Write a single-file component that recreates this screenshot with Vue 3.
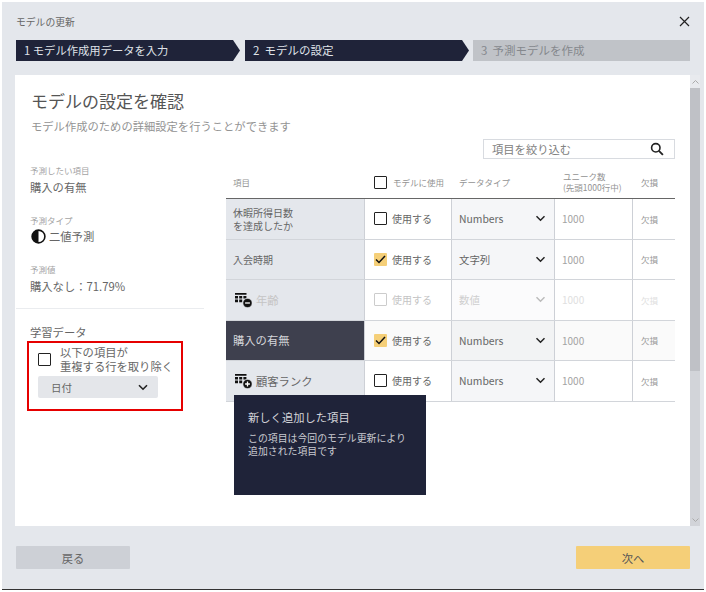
<script setup>
const rows = [
  { name: '休暇所得日数\nを達成したか', small: true, checked: false, type: 'Numbers' },
  { name: '入会時期', small: true, checked: true, type: '文字列' },
  { name: '年齢', icon: 'minus', checked: false, type: '数値', disabled: true },
  { name: '購入の有無', checked: true, type: 'Numbers', target: true },
  { name: '顧客ランク', icon: 'plus', checked: false, type: 'Numbers' }
]
</script>

<template>
  <div class="dialog">
    <header class="top">
      <span class="dialog-title">モデルの更新</span>
      <svg class="close" width="11" height="11" viewBox="0 0 11 11"><path d="M1 1l9 9M10 1l-9 9" stroke="#222" stroke-width="1.2" fill="none" /></svg>
    </header>
    <div class="steps">
      <div class="step step-one">1 モデル作成用データを入力</div>
      <div class="step step-two">2&nbsp; モデルの設定</div>
      <div class="step step-three">3&nbsp; 予測モデルを作成</div>
    </div>

    <main class="panel">
      <div class="content">
        <h1>モデルの設定を確認</h1>
        <p class="subtitle">モデル作成のための詳細設定を行うことができます</p>
        <div class="search-row">
          <div class="search">
            <span>項目を絞り込む</span>
            <svg width="14" height="14" viewBox="0 0 14 14"><circle cx="5.8" cy="5.8" r="4.2" stroke="#222" stroke-width="1.6" fill="none" /><path d="M8.9 8.9l4 4" stroke="#222" stroke-width="1.8" fill="none" /></svg>
          </div>
        </div>
        <div class="columns">
          <aside class="side">
            <div class="info info-first">
              <div class="label">予測したい項目</div>
              <div class="value">購入の有無</div>
            </div>
            <div class="info">
              <div class="label">予測タイプ</div>
              <div class="value with-icon">
                <svg width="15" height="15" viewBox="0 0 15 15"><circle cx="7.5" cy="7.5" r="6.4" fill="#fff" stroke="#111" stroke-width="1.6" /><path d="M7.5 1.1a6.4 6.4 0 0 0 0 12.8z" fill="#111" /></svg>
                <span>二値予測</span>
              </div>
            </div>
            <div class="info">
              <div class="label">予測値</div>
              <div class="value">購入なし：71.79%</div>
            </div>
            <div class="learning">
              <div class="learning-title">学習データ</div>
              <div class="highlight">
                <div class="dedupe">
                  <span class="box"></span>
                  <span class="dedupe-text">以下の項目が<br />重複する行を取り除く</span>
                </div>
                <div class="date-select">
                  <span>日付</span>
                  <svg width="10" height="7" viewBox="0 0 10 7"><path d="M1 1.2l4 4 4-4" stroke="#222" stroke-width="1.6" fill="none" /></svg>
                </div>
              </div>
            </div>
          </aside>

          <section class="table-wrap">
            <div class="grid head">
              <div class="hcell hname">項目</div>
              <div class="hcell huse"><span class="box"></span><span>モデルに使用</span></div>
              <div class="hcell htype">データタイプ</div>
              <div class="hcell hunique">ユニーク数<br />(先頭1000行中)</div>
              <div class="hcell hmiss">欠損</div>
            </div>
            <div
              v-for="row in rows"
              :key="row.name"
              class="grid row"
              :class="{ disabled: row.disabled, target: row.target }"
            >
              <div class="cell name" :class="{ small: row.small }">
                <svg v-if="row.icon" class="item-icon" width="19" height="16" viewBox="0 0 19 16">
                  <path d="M2 1h11.5v1.8H2zM2 3.9h3v2.6H2zM6.2 3.9h3v2.6h-3zM10.4 3.9h3v2.6h-3zM2 7.6h3v2.6H2zM6.2 7.6h3v2.6h-3z" fill="#111" />
                  <circle cx="14.5" cy="11" r="4.6" fill="#111" stroke="#e4e7ec" stroke-width=".6" />
                  <path v-if="row.icon === 'plus'" d="M14.5 8.6v4.8M12.1 11h4.8" stroke="#fff" stroke-width="1.3" />
                  <path v-else d="M12.1 11h4.8" stroke="#fff" stroke-width="1.3" />
                </svg>
                <span class="name-text">{{ row.name }}</span>
              </div>
              <div class="cell use">
                <span class="box" :class="{ on: row.checked }">
                  <svg v-if="row.checked" width="11" height="9" viewBox="0 0 11 9"><path d="M1 4.5l3 3 6-6.4" stroke="#111" stroke-width="1.5" fill="none" /></svg>
                </span>
                <span>使用する</span>
              </div>
              <div class="cell type">
                <span>{{ row.type }}</span>
                <svg width="11" height="7" viewBox="0 0 11 7"><path d="M1.5 1.2l4 4 4-4" stroke="currentColor" stroke-width="1.5" fill="none" /></svg>
              </div>
              <div class="cell unique">1000</div>
              <div class="cell miss">欠損</div>
            </div>
            <div class="tooltip">
              <div class="tip-title">新しく追加した項目</div>
              <div class="tip-body">この項目は今回のモデル更新により<br />追加された項目です</div>
            </div>
          </section>
        </div>
      </div>
      <div class="scrollbar">
        <div class="arrow arrow-top"><svg width="7" height="4" viewBox="0 0 7 4"><path d="M.5 3.5l3-3 3 3" stroke="#aaa" fill="none" /></svg></div>
        <div class="thumb"></div>
        <div class="track"></div>
        <div class="arrow"><svg width="7" height="4" viewBox="0 0 7 4"><path d="M.5.5l3 3 3-3" stroke="#aaa" fill="none" /></svg></div>
      </div>
    </main>

    <footer class="footer">
      <button class="btn back">戻る</button>
      <button class="btn next">次へ</button>
    </footer>
  </div>
</template>

<style>
html, body { margin: 0; background: #fff; }
</style>

<style scoped>
.dialog {
  box-sizing: border-box;
  width: 702px;
  height: 588px;
  margin: 2px 0 0 2px;
  background: #e4e7ec;
  border-bottom: 1.5px solid #333;
  font-family: "Noto Sans CJK JP", "Noto Sans", sans-serif;
  color: #666;
  font-size: 11.3px;
  display: flex;
  flex-direction: column;
}
.top {
  height: 38px;
  padding: 0 14px;
  display: flex;
  align-items: center;
  justify-content: space-between;
}
.dialog-title { font-size: 9.8px; color: #666; margin-top: 1px; }
.steps { display: flex; padding-left: 14px; height: 21px; }
.step {
  box-sizing: border-box;
  height: 21px;
  line-height: 21px;
  font-size: 11.3px;
  color: #dfe2e8;
  background: #1f2339;
  padding-left: 8px;
  clip-path: polygon(0 0, calc(100% - 7px) 0, 100% 50%, calc(100% - 7px) 100%, 0 100%);
}
.step-one { width: 224px; margin-right: 5px; }
.step-two { width: 224px; margin-right: 4px; font-size: 11.5px; }
.step-three {
  width: 217px;
  background: #c0c3c8;
  color: #85888d;
  clip-path: none;
  font-size: 11.5px;
}
.panel {
  margin: 14px 0 0 13px;
  height: 451px;
  width: 685px;
  display: flex;
  background: #fff;
}
.content { flex: 1; min-width: 0; position: relative; }
h1 {
  margin: 0;
  padding: 14px 0 0 16px;
  font-size: 17px;
  line-height: 24px;
  font-weight: 400;
  color: #555;
}
.subtitle {
  margin: 5px 0 0 16px;
  line-height: 17px;
  color: #939393;
  font-size: 11.3px;
}
.search-row { display: flex; justify-content: flex-end; padding: 4px 15px 0 0; height: 27px; }
.search {
  box-sizing: border-box;
  width: 192px;
  height: 20px;
  border: 1px solid #d8dbe0;
  display: flex;
  align-items: center;
  justify-content: space-between;
  padding: 0 10px 0 8px;
  color: #808080;
}
.columns { display: flex; }
.side { width: 188px; margin-left: 1px; flex: none; position: relative; top: -2px; }
.info { padding-left: 14px; margin-top: 17px; }
.info-first { margin-top: 0; }
.label { font-size: 8.5px; line-height: 12px; color: #a3a3a3; }
.value { line-height: 20px; font-size: 11.3px; color: #666; margin-top: 1px; }
.with-icon { display: flex; align-items: center; gap: 3px; margin-left: 1px; margin-top: 0; }
.with-icon svg { flex: none; }
.learning { border-top: 1px solid #eaecef; margin-top: 12px; padding-top: 15px; }
.learning-title { padding-left: 14px; line-height: 16px; color: #666; }
.highlight {
  box-sizing: border-box;
  width: 156px;
  height: 70px;
  margin: 1px 0 0 11px;
  border: 2px solid #e60000;
  padding: 2px 0 0 9px;
}
.dedupe { display: flex; align-items: center; gap: 9px; }
.dedupe-text { line-height: 14px; color: #666; }
.date-select {
  box-sizing: border-box;
  width: 120px;
  height: 22px;
  margin-top: 3px;
  background: #e4e6ea;
  border-radius: 2px;
  padding: 0 10px 0 13px;
  display: flex;
  align-items: center;
  justify-content: space-between;
  font-size: 10.5px;
}
.box {
  box-sizing: border-box;
  flex: none;
  width: 13px;
  height: 13px;
  border: 1.5px solid #222;
  border-radius: 1px;
  background: #fff;
  display: inline-flex;
  align-items: center;
  justify-content: center;
}
.box.on { background: #f5cf78; border: none; }
.table-wrap { position: relative; width: 449px; margin-left: 22px; flex: none; top: 3px; }
.grid { display: grid; grid-template-columns: 139px 87px 103px 78px 42px; }
.head { height: 30px; border-bottom: 1.5px solid #666; align-items: center; padding-bottom: 3px; box-sizing: border-box; }
.hcell { font-size: 8.5px; color: #939393; line-height: 11px; }
.hname { padding-left: 7px; }
.huse { display: flex; align-items: center; gap: 6px; padding-left: 9px; }
.htype { padding-left: 7px; }
.hunique { padding-left: 8px; white-space: nowrap; }
.hmiss { padding-left: 8px; }
.row { height: 40.5px; border-bottom: 1px solid #d2d5da; box-sizing: border-box; }
.cell { display: flex; align-items: center; box-sizing: border-box; border-right: 1px solid #cdd0d6; }
.cell:last-child { border-right: none; }
.name { background: #e4e7ec; padding-left: 7px; color: #666; }
.name.small { font-size: 10px; line-height: 13px; }
.name-text { white-space: pre-line; }
.item-icon { flex: none; margin-right: 4px; }
.use { padding-left: 9px; gap: 5px; font-size: 10px; color: #666; }
.type { background: #f5f6f8; padding: 0 8px 0 7px; justify-content: space-between; color: #666; font-size: 10.4px; }
.type svg { color: #222; }
.unique { padding-left: 7px; color: #a3a3a3; font-size: 10px; }
.miss { padding-left: 8px; color: #999; font-size: 8.5px; }
.disabled .name-text { color: #c4c4c4; }
.disabled .use { color: #c4c4c4; }
.disabled .box { border-color: #ccc; }
.disabled .type { background: #fbfbfc; color: #cfcfcf; }
.disabled .type svg { color: #bbb; }
.disabled .unique, .disabled .miss { color: #e0e0e0; }
.target .name { background: #3e404e; color: #d5d6da; }
.target .use, .target .unique, .target .miss { background: #fafafa; }
.target .type { background: #f2f3f4; }
.tooltip {
  position: absolute;
  left: 8px;
  top: 226px;
  box-sizing: border-box;
  width: 192px;
  height: 100px;
  background: #1f2339;
  padding: 14px 14px 0;
  color: #d4d5da;
}
.tip-title { line-height: 17px; font-size: 11.3px; }
.tip-body { margin-top: 6px; font-size: 9.9px; line-height: 13px; color: #c9cad0; }
.scrollbar { width: 10px; flex: none; display: flex; flex-direction: column; background: #d2d4d9; }
.arrow { height: 13px; display: flex; align-items: center; justify-content: center; flex: none; }
.arrow-top { background: #e8eaee; }
.thumb { height: 283px; background: #bfc1c6; flex: none; }
.track { flex: 1; }
.footer {
  display: flex;
  justify-content: space-between;
  padding: 20px 14px 0 14px;
}
.btn {
  width: 114px;
  height: 23px;
  border: none;
  border-radius: 1px;
  font: inherit;
  font-size: 11.3px;
  padding: 0;
}
.back { background: #cdd0d6; color: #666; }
.next { background: #f5cf78; color: #555; }
</style>
